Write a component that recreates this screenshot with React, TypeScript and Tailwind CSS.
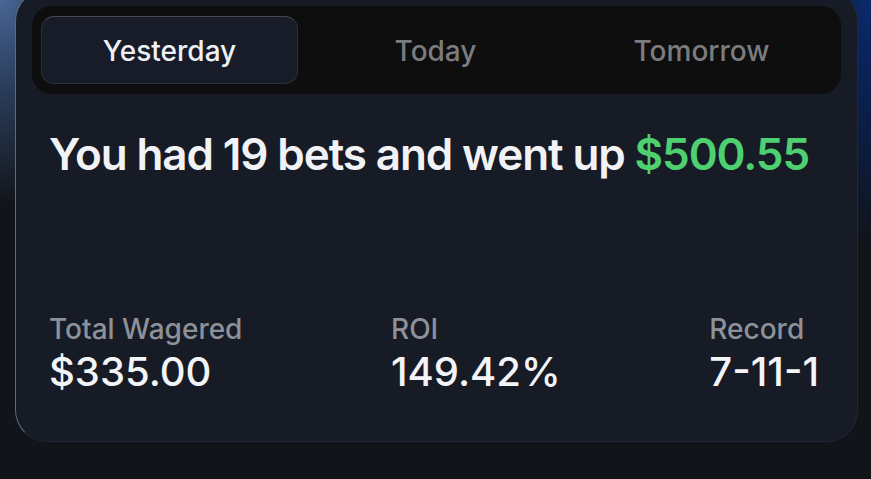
import React, { useState } from 'react';

type Day = 'Yesterday' | 'Today' | 'Tomorrow';

const DAYS: Day[] = ['Yesterday', 'Today', 'Tomorrow'];

const STATS = [
  { label: 'Total Wagered', value: '$335.00' },
  { label: 'ROI', value: '149.42%' },
  { label: 'Record', value: '7-11-1' },
];

const DayTabs: React.FC<{ active: Day; onChange: (d: Day) => void }> = ({ active, onChange }) => {
  return (
    <div className="flex gap-[9px] rounded-[20px] bg-[#0e0e0f] p-[10px] pr-[11px] pl-[9px]">
      {DAYS.map((day) => (
        <button
          key={day}
          onClick={() => onChange(day)}
          className={
            day === active
              ? 'h-[68px] w-[257px] rounded-[13px] border border-[#2c303a] border-t-[#454850] bg-[#171c28] pt-[2px] text-[28px] font-medium text-[#eef0f5]'
              : 'h-[68px] w-[257px] rounded-[13px] border border-transparent pt-[2px] text-[28px] font-medium text-[#7b7c7f]'
          }
        >
          {day}
        </button>
      ))}
    </div>
  );
};

export default function App() {
  const [day, setDay] = useState<Day>('Yesterday');

  return (
    <div
      className="h-[479px] w-[871px] overflow-hidden bg-[#111418] text-white"
      style={{ fontFamily: 'Inter, "Noto Sans", sans-serif' }}
    >
      <div className="h-full w-full bg-[radial-gradient(ellipse_120px_220px_at_0%_0%,#4c6b9c_0%,#2a3d5c_45%,rgba(17,20,24,0)_100%),radial-gradient(ellipse_90px_260px_at_100%_0%,#0b2c6e_0%,#0a2050_40%,rgba(17,20,24,0)_100%)] px-[15px] pr-[13px]">
        <div className="-mt-[11px] rounded-[32px] border border-[#232835] border-t-[#5d6f8e] border-l-[#5a6b89] bg-[#161b26] px-[16px] pt-[16px] pb-[44px]">
          <DayTabs active={day} onChange={setDay} />

          <h1 className="mt-[32px] whitespace-nowrap px-[17px] text-[44px] font-semibold leading-[56px] tracking-[-1.1px] text-[#f1f2f6]">
            You had 19 bets and went up <span className="text-[#4fd070]">$500.55</span>
          </h1>

          <div className="mt-[130px] flex justify-between pl-[17px] pr-[22px]">
            {STATS.map((s) => (
              <div key={s.label} className="flex flex-col">
                <span className="text-[28px] font-medium leading-[34px] text-[#8d9199]">{s.label}</span>
                <span className="text-[40px] font-medium leading-[51px] text-[#f3f4f7]">{s.value}</span>
              </div>
            ))}
          </div>
        </div>
      </div>
    </div>
  );
}
